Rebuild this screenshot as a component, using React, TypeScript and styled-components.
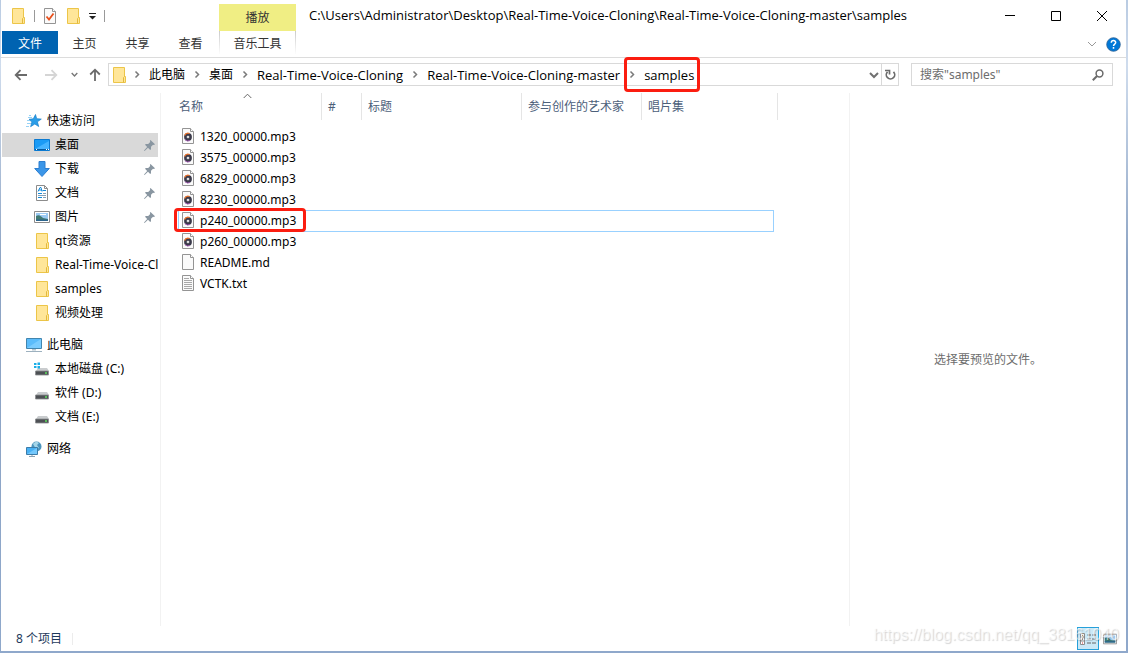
import React from "react";
import styled, { createGlobalStyle, css } from "styled-components";

const GlobalStyle = createGlobalStyle`
  * { box-sizing: border-box; }
  body {
    margin: 0;
    font-family: "Noto Sans", "Noto Sans CJK SC", sans-serif;
    font-size: 12px;
    line-height: 18px;
    color: #000;
  }
  button, input { font: inherit; color: inherit; }
  button { border: 0; background: none; padding: 0; cursor: default; }
  a { color: inherit; text-decoration: none; }
  svg { display: block; flex: none; }
`;

const pathFont = css`
  font-family: "Open Sans", "Noto Sans CJK SC", sans-serif;
  font-size: 13px;
`;

const Desktop = styled.div`
  min-height: 100vh;
  display: flex;
  padding: 0 2px 2px 1px;
  background: linear-gradient(#b9cbe2, #cfdced 10%, #8da4c4 40%, #8fa8cb);
`;

const Window = styled.main`
  position: relative;
  flex: 1;
  min-width: 0;
  display: flex;
  flex-direction: column;
  background: #fff;
`;

const Header = styled.header`
  display: grid;
  grid-template-columns: 218px 77px 1fr;
  grid-template-rows: 31px 26px;
  border-bottom: 1px solid #dcdcdc;
`;

const QuickBar = styled.div`
  display: flex;
  align-items: center;
  gap: 8px;
  padding-left: 9px;
`;

const QuickButton = styled.button`
  padding: 0 1px;
`;

const Divider = styled.span<{ $light?: boolean }>`
  width: 1px;
  height: 12px;
  background: ${(p) => (p.$light ? "#ececec" : "#999")};
`;

const ContextTitle = styled.div`
  display: flex;
  align-items: center;
  justify-content: center;
  margin-top: 4px;
  background: #f0ee84;
  color: #333;
`;

const TitleRow = styled.div`
  display: flex;
  justify-content: space-between;
  align-items: stretch;
  padding-left: 13px;
`;

const Title = styled.h1`
  ${pathFont}
  margin: 0;
  font-weight: 400;
  line-height: 31px;
  white-space: nowrap;
`;

const WindowButtons = styled.div`
  display: flex;
  padding-right: 1px;
`;

const WindowButton = styled.button`
  width: 46px;
  display: flex;
  align-items: center;
  justify-content: center;
`;

const Tabs = styled.nav`
  display: flex;
  align-items: flex-start;
  padding-left: 1px;
`;

const Tab = styled.button<{ $kind?: "file" | "context" }>`
  width: 53px;
  height: 23px;
  padding-top: 2px;
  color: #333;
  ${(p) =>
    p.$kind === "file" &&
    css`
      width: 56px;
      background: #0063b1;
      color: #fff;
    `}
  ${(p) =>
    p.$kind === "context" &&
    css`
      width: 77px;
      border: solid transparent;
      border-width: 0 1px;
      border-image: linear-gradient(#c8c8c8, #fff) 1;
    `}
`;

const RibbonTools = styled.div`
  display: flex;
  justify-content: flex-end;
  align-items: center;
  gap: 9px;
  padding-right: 5px;
`;

const AddressRow = styled.div`
  display: flex;
  align-items: center;
  height: 33px;
  padding-right: 13px;
`;

const NavButtons = styled.div`
  display: flex;
  align-items: center;
  width: 107px;
  padding-left: 13px;
`;

const NavButton = styled.button<{ $w: number }>`
  width: ${(p) => p.$w}px;
`;

const AddressBox = styled.nav`
  flex: 1;
  min-width: 0;
  height: 23px;
  display: flex;
  align-items: center;
  border: 1px solid #d9d9d9;
  padding-left: 2px;
`;

const Crumbs = styled.ol`
  display: flex;
  flex: 1;
  margin: 0 0 0 -2px;
  padding: 0;
  list-style: none;
  white-space: nowrap;
`;

const Crumb = styled.li`
  position: relative;
  display: flex;
  align-items: center;
`;

const CrumbLink = styled.a<{ $latin: boolean }>`
  ${(p) => p.$latin && pathFont}
`;

const RefreshButton = styled.button`
  width: 17px;
  height: 21px;
  margin-left: 2px;
  border-left: 1px solid #d9d9d9;
`;

const SearchBox = styled.label`
  width: 202px;
  height: 23px;
  margin-left: 12px;
  display: flex;
  align-items: center;
  padding: 0 8px;
  border: 1px solid #d9d9d9;
`;

const SearchInput = styled.input`
  flex: 1;
  min-width: 0;
  border: 0;
  padding: 0;
  outline: 0;
  background: none;
  &::placeholder { color: #6d6d6d; opacity: 1; }
`;

const Mark = styled.span<{ $kind: "crumb" | "file" }>`
  position: absolute;
  border: 3px solid #fb1d10;
  border-radius: 4px;
  pointer-events: none;
  z-index: 1;
  inset: ${(p) => (p.$kind === "crumb" ? "-9px -6px -8px 4px" : "-2px 16px -1px -1px")};
`;

const Content = styled.div`
  flex: 1;
  display: flex;
  padding-top: 2px;
`;

const Sidebar = styled.nav`
  width: 160px;
  padding: 16px 2px 0 1px;
  border-right: 1px solid #f2f2f2;
`;

const Tree = styled.ul`
  margin: 0 0 8px;
  padding: 0;
  list-style: none;
`;

const TreeLink = styled.a<{ $level?: number; $selected?: boolean }>`
  display: flex;
  align-items: center;
  gap: 5px;
  height: 24px;
  padding-right: 3px;
  padding-left: ${(p) => (p.$level ? 32 : 24)}px;
  background: ${(p) => (p.$selected ? "#d9d9d9" : "none")};
`;

const TreeLabel = styled.span`
  flex: 1;
  overflow: hidden;
  white-space: nowrap;
  margin-right: -3px;
`;

const Files = styled.section`
  flex: 1;
  min-width: 0;
  padding-left: 14px;
`;

const FileTable = styled.table`
  table-layout: fixed;
  width: 603px;
  border-collapse: separate;
  border-spacing: 0;
`;

const HeadCell = styled.th<{ $w: number }>`
  position: relative;
  width: ${(p) => p.$w}px;
  height: 27px;
  padding: 0 6px;
  border-right: 1px solid #e5e5e5;
  color: #4c607a;
  font-weight: 400;
  text-align: left;
  white-space: nowrap;
  &:first-child { padding-left: 4px; }
`;

const SortMark = styled.span`
  position: absolute;
  top: 0;
  left: 68px;
`;

const FileRows = styled.tbody`
  &::before { content: ""; display: block; height: 6px; }
`;

const FileRow = styled.tr<{ $selected?: boolean }>`
  position: relative;
  height: 21px;
  ${(p) =>
    p.$selected &&
    css`
      &::after {
        content: "";
        position: absolute;
        inset: 0 4px -1px 3px;
        border: 1px solid #99d1ff;
      }
    `}
`;

const FileCell = styled.td`
  position: relative;
  padding: 0;
`;

const FileName = styled.span`
  display: flex;
  align-items: flex-start;
  gap: 6px;
  padding-left: 7px;
`;

const Preview = styled.aside`
  width: 277px;
  display: flex;
  align-items: center;
  justify-content: center;
  border-left: 1px solid #f2f2f2;
  color: #6d6d6d;
`;

const StatusBar = styled.footer`
  display: flex;
  align-items: center;
  justify-content: space-between;
  height: 25px;
  padding: 0 5px 0 15px;
  color: #1e395b;
`;

const StatusGroup = styled.div<{ $gap: number }>`
  display: flex;
  align-items: center;
  gap: ${(p) => p.$gap}px;
`;

const ViewButton = styled.button<{ $active?: boolean }>`
  width: 22px;
  height: 23px;
  display: flex;
  align-items: center;
  justify-content: center;
  border: 1px solid ${(p) => (p.$active ? "#26a0da" : "transparent")};
  background: ${(p) => (p.$active ? "#cbe8f6" : "none")};
`;

const Watermark = styled.span`
  position: absolute;
  right: 7px;
  bottom: 5px;
  font: 16px/22px "Liberation Sans", sans-serif;
  color: rgba(255, 255, 255, 0.6);
  text-shadow: 1px 1px 1px rgba(0, 0, 0, 0.17);
  pointer-events: none;
`;

const FolderIcon = () => (
  <svg width="16" height="16" viewBox="0 0 16 16">
    <path d="M2.500.5h11v9h1v6h-12z" fill="#ffe699" stroke="#ecc548" />
    <path d="M12.500 15.500v-5l1-1" fill="none" stroke="#e3b93c" />
  </svg>
);

const PageIcon = ({ children }: { children?: React.ReactNode }) => (
  <svg width="12" height="16" viewBox="0 0 12 16">
    <path d="M.5.5h8l3 3v12H.5z" fill="#fafafa" stroke="#949494" />
    <path d="M8.500.5v3h3" fill="#fff" stroke="#949494" />
    {children}
  </svg>
);

const MusicIcon = () => (
  <PageIcon>
    <circle cx="6" cy="9" r="3.900" fill="#3b3a4a" />
    <path d="M2.600 7.500a3.900 3.900 0 0 1 5-2" stroke="#e8702a" strokeWidth="1.300" fill="none" />
    <path d="M3 11.500a3.900 3.900 0 0 0 5 1" stroke="#a05bb0" fill="none" />
    <circle cx="6" cy="9" r="1.300" fill="#fff" />
    <circle cx="6" cy="9" r=".5" fill="#444" />
  </PageIcon>
);

const TextIcon = () => (
  <PageIcon>
    <path d="M2 3.500h5M2 5.500h8M2 7.500h8M2 9.500h8M2 11.500h8M2 13.500h8" stroke="#a8a8a8" />
  </PageIcon>
);

const CheckPageIcon = () => (
  <PageIcon>
    <path d="M2.500 8.500l2.500 3 4.500-6" fill="none" stroke="#e8501c" strokeWidth="1.800" />
  </PageIcon>
);

const StarIcon = () => (
  <svg width="16" height="16" viewBox="0 0 16 16">
    <path d="M9.500 1.500l1.200 4.200 4.600.4-3.900 2.700 1.300 4.700L8.800 11l-4.200 2.700 1.300-4.600L3 6.300l4.300-.5z" fill="#2a9de8" stroke="#1780cc" strokeWidth=".7" />
    <path d="M2 4.500h4M3 2.500h2M1 7.500h3M1 10.500h4M0 13.500h3" stroke="#7cc6f2" strokeWidth=".8" />
  </svg>
);

const DesktopIcon = () => (
  <svg width="16" height="16" viewBox="0 0 16 16">
    <path d="M.5 2.500h15v11H.5z" fill="#1b9bf5" stroke="#0b7ad1" />
    <path d="M1 12L15 4v8z" fill="#46b4ff" />
    <path d="M1 12.500h14" stroke="#085b9f" />
    <path d="M2 12.500h1M12 12.500h1M14 12.500h1" stroke="#fff" />
  </svg>
);

const DownloadIcon = () => (
  <svg width="16" height="16" viewBox="0 0 16 16">
    <path d="M5 .5h6v7h4.300L8 15.500.7 7.500H5z" fill="#3b96e8" stroke="#2c7ed0" />
  </svg>
);

const DocumentIcon = () => (
  <svg width="16" height="16" viewBox="0 0 16 16">
    <path d="M2.500.5h8l3 3v12h-11z" fill="#fff" stroke="#8c8c8c" />
    <path d="M10.500.5v3h3" fill="none" stroke="#8c8c8c" />
    <path d="M4 6.500l2-4h1l1 4M5 5h3M8.500 5.500h3.500M4 8.500h4M4 12.500h4" stroke="#1589d8" fill="none" />
    <path d="M9 8.500h3M4 10.500h8M9 12.500h3" stroke="#87a0b4" />
  </svg>
);

const PictureIcon = ({ size = 16 }: { size?: number }) => (
  <svg width={size} height={size} viewBox="0 0 16 16">
    <path d="M.5 2.500h15v11H.5z" fill="#fff" stroke="#8c8c8c" />
    <path d="M2 4h12v8H2z" fill="#9bcaf3" />
    <path d="M2 7c3-2 5 0 7 2l5 1v2H2z" fill="#417a73" />
    <path d="M2 10.500h12V12H2z" fill="#2c658d" />
    <path d="M6 5.500h6" stroke="#fff" />
  </svg>
);

const ComputerIcon = () => (
  <svg width="16" height="16" viewBox="0 0 16 16">
    <path d="M.5 1.500h15v10H.5z" fill="#5bbcfb" stroke="#4285ae" />
    <path d="M1 11L15 2v9z" fill="#7accff" />
    <path d="M6 12h4v1.500H6z" fill="#b3c4cf" />
    <path d="M0 14.500h16" stroke="#9db1bf" />
  </svg>
);

const DriveIcon = ({ system }: { system?: boolean }) => (
  <svg width="16" height="16" viewBox="0 0 16 16">
    <path d="M4 7h9l2 3H2z" fill="#c9ccce" />
    <path d="M1.500 10h13v4h-13z" fill="#4d5054" stroke="#8b8e91" strokeWidth=".8" />
    <path d="M11 12h2" stroke="#5be05b" strokeWidth="1.400" />
    {system && (
      <>
        <path d="M0 1h7v6H0z" fill="#fff" />
        <path d="M0 2h2.500v2H0zM3.500 1.500H6V4H3.500zM0 5h2.500v2H0zM3.500 5H6v2.500H3.500z" fill="#19aee8" />
      </>
    )}
  </svg>
);

const NetworkIcon = () => (
  <svg width="16" height="16" viewBox="0 0 16 16">
    <circle cx="10.500" cy="5.500" r="5" fill="#4b94bd" />
    <path d="M7 3c2-3 5-2 6-1l-2 2 2 3-3 1z" fill="#a5d5e8" />
    <path d="M.5 6.500h11v7H.5z" fill="#48b1f5" stroke="#3c7ca8" />
    <path d="M1 13L11 7v6z" fill="#74c8fc" />
    <path d="M6 14v1.500M3 15.500h6" stroke="#8aa2b2" />
  </svg>
);

const PinIcon = () => (
  <svg width="11" height="11" viewBox="0 0 11 11">
    <path d="M6.500 0L11 4.200l-1 .8-1-.2-2 2v2.500l-.8.8L4 7.800.6 10.900 0 10.400 3.200 7 1 4.800 1.800 4h2.400l2-2-.3-1.200z" fill="#8996a1" />
  </svg>
);

const CrumbArrow = () => (
  <svg width="24" height="9" viewBox="0 0 24 9">
    <path d="M10.500 1.500l3 3-3 3" fill="none" stroke="#7a7a7a" strokeWidth="1.500" />
  </svg>
);

const ChevronDown = ({ size, color, weight = 1.5 }: { size: number; color: string; weight?: number }) => (
  <svg width={size} height={size} viewBox="0 0 10 10">
    <path d="M1 3l4 4 4-4" fill="none" stroke={color} strokeWidth={weight} />
  </svg>
);

const ArrowIcon = ({ color, turn = 0 }: { color: string; turn?: number }) => (
  <svg width="14" height="14" viewBox="0 0 14 14">
    <path transform={`rotate(${turn} 7 7)`} d="M13 7H2M6.500 2.200L1.700 7l4.800 4.800" fill="none" stroke={color} strokeWidth="1.800" />
  </svg>
);

const tree = [
  [
    { label: "快速访问", icon: <StarIcon />, root: true },
    { label: "桌面", icon: <DesktopIcon />, pinned: true, selected: true },
    { label: "下载", icon: <DownloadIcon />, pinned: true },
    { label: "文档", icon: <DocumentIcon />, pinned: true },
    { label: "图片", icon: <PictureIcon />, pinned: true },
    { label: "qt资源", icon: <FolderIcon /> },
    { label: "Real-Time-Voice-Cloning", icon: <FolderIcon /> },
    { label: "samples", icon: <FolderIcon /> },
    { label: "视频处理", icon: <FolderIcon /> },
  ],
  [
    { label: "此电脑", icon: <ComputerIcon />, root: true },
    { label: "本地磁盘 (C:)", icon: <DriveIcon system /> },
    { label: "软件 (D:)", icon: <DriveIcon /> },
    { label: "文档 (E:)", icon: <DriveIcon /> },
  ],
  [{ label: "网络", icon: <NetworkIcon />, root: true }],
] as { label: string; icon: React.ReactNode; root?: boolean; pinned?: boolean; selected?: boolean }[][];

const crumbs = ["此电脑", "桌面", "Real-Time-Voice-Cloning", "Real-Time-Voice-Cloning-master", "samples"];

const columns = [
  { label: "名称", width: 147, sorted: true },
  { label: "#", width: 40 },
  { label: "标题", width: 160 },
  { label: "参与创作的艺术家", width: 120 },
  { label: "唱片集", width: 136 },
];

const files = [
  { name: "1320_00000.mp3", icon: <MusicIcon /> },
  { name: "3575_00000.mp3", icon: <MusicIcon /> },
  { name: "6829_00000.mp3", icon: <MusicIcon /> },
  { name: "8230_00000.mp3", icon: <MusicIcon /> },
  { name: "p240_00000.mp3", icon: <MusicIcon />, selected: true },
  { name: "p260_00000.mp3", icon: <MusicIcon /> },
  { name: "README.md", icon: <PageIcon /> },
  { name: "VCTK.txt", icon: <TextIcon /> },
];

export default function App() {
  return (
    <>
      <GlobalStyle />
      <Desktop>
        <Window>
          <Header>
            <QuickBar>
              <FolderIcon />
              <Divider />
              <QuickButton aria-label="属性"><CheckPageIcon /></QuickButton>
              <button aria-label="新建文件夹"><FolderIcon /></button>
              <button aria-label="自定义快速访问工具栏">
                <svg width="7" height="8" viewBox="0 0 7 8">
                  <path d="M0 1.500h7" stroke="#222" />
                  <path d="M0 4h7L3.500 7.500z" fill="#222" />
                </svg>
              </button>
              <Divider />
            </QuickBar>
            <ContextTitle>播放</ContextTitle>
            <TitleRow>
              <Title>C:\Users\Administrator\Desktop\Real-Time-Voice-Cloning\Real-Time-Voice-Cloning-master\samples</Title>
              <WindowButtons>
                <WindowButton aria-label="最小化">
                  <svg width="10" height="11" viewBox="0 0 10 11"><path d="M0 5.500h10" stroke="#000" /></svg>
                </WindowButton>
                <WindowButton aria-label="最大化">
                  <svg width="10" height="10" viewBox="0 0 10 10"><path d="M.5.5h9v9h-9z" fill="none" stroke="#000" /></svg>
                </WindowButton>
                <WindowButton aria-label="关闭">
                  <svg width="10" height="10" viewBox="0 0 10 10"><path d="M0 0l10 10M10 0L0 10" stroke="#000" /></svg>
                </WindowButton>
              </WindowButtons>
            </TitleRow>
            <Tabs>
              <Tab $kind="file">文件</Tab>
              <Tab>主页</Tab>
              <Tab>共享</Tab>
              <Tab>查看</Tab>
            </Tabs>
            <Tab $kind="context">音乐工具</Tab>
            <RibbonTools>
              <button aria-label="展开功能区"><ChevronDown size={10} color="#999" weight={1} /></button>
              <button aria-label="帮助">
                <svg width="15" height="15" viewBox="0 0 15 15">
                  <circle cx="7.500" cy="7.500" r="6.800" fill="#0078d7" stroke="#2b5f93" strokeWidth=".8" />
                  <path d="M5.300 5.800c0-3 4.500-2.800 4.400-.2 0 1.500-2.200 1.500-2.200 3.300M7.500 10v1.700" fill="none" stroke="#fff" strokeWidth="1.500" />
                </svg>
              </button>
            </RibbonTools>
          </Header>

          <AddressRow>
            <NavButtons>
              <NavButton $w={30} aria-label="后退"><ArrowIcon color="#6b6b6b" /></NavButton>
              <NavButton $w={27} aria-label="前进"><ArrowIcon color="#d5d5d5" turn={180} /></NavButton>
              <NavButton $w={17} aria-label="最近浏览的位置"><ChevronDown size={7} color="#777" weight={2} /></NavButton>
              <NavButton $w={14} aria-label="上移"><ArrowIcon color="#6b6b6b" turn={90} /></NavButton>
            </NavButtons>
            <AddressBox aria-label="地址">
              <FolderIcon />
              <Crumbs>
                {crumbs.map((name, i) => (
                  <Crumb key={name}>
                    <CrumbArrow />
                    <CrumbLink href="#" $latin={/^[\x20-\x7e]+$/.test(name)}>{name}</CrumbLink>
                    {i === crumbs.length - 1 && <Mark $kind="crumb" />}
                  </Crumb>
                ))}
              </Crumbs>
              <button aria-label="以前的位置"><ChevronDown size={10} color="#707070" weight={2} /></button>
              <RefreshButton aria-label="刷新">
                <svg width="16" height="14" viewBox="0 0 16 14">
                  <path d="M5.500 3.800a4.200 4.200 0 1 0 6 0" fill="none" stroke="#6b6b6b" strokeWidth="1.700" />
                  <path d="M3 2.500h4.500v4" fill="none" stroke="#6b6b6b" strokeWidth="1.700" />
                </svg>
              </RefreshButton>
            </AddressBox>
            <SearchBox>
              <SearchInput type="text" aria-label="搜索" placeholder={'搜索"samples"'} />
              <svg width="12" height="12" viewBox="0 0 12 12">
                <circle cx="7.500" cy="4.500" r="3.400" fill="none" stroke="#6b6b6b" strokeWidth="1.500" />
                <path d="M5 7L.8 11.200" stroke="#6b6b6b" strokeWidth="2" />
              </svg>
            </SearchBox>
          </AddressRow>

          <Content>
            <Sidebar aria-label="导航窗格">
              {tree.map((group) => (
                <Tree key={group[0].label}>
                  {group.map((item) => (
                    <li key={item.label}>
                      <TreeLink href="#" $level={item.root ? 0 : 1} $selected={item.selected}>
                        {item.icon}
                        <TreeLabel>{item.label}</TreeLabel>
                        {item.pinned && <PinIcon />}
                      </TreeLink>
                    </li>
                  ))}
                </Tree>
              ))}
            </Sidebar>
            <Files>
              <FileTable>
                <thead>
                  <tr>
                    {columns.map((c) => (
                      <HeadCell key={c.label} $w={c.width}>
                        {c.label}
                        {c.sorted && (
                          <SortMark>
                            <svg width="9" height="6" viewBox="0 0 9 6">
                              <path d="M.7 5l3.800-3.800L8.300 5" fill="none" stroke="#666" />
                            </svg>
                          </SortMark>
                        )}
                      </HeadCell>
                    ))}
                  </tr>
                </thead>
                <FileRows>
                  {files.map((f) => (
                    <FileRow key={f.name} $selected={f.selected}>
                      <FileCell>
                        <FileName>
                          {f.icon}
                          {f.name}
                        </FileName>
                        {f.selected && <Mark $kind="file" />}
                      </FileCell>
                      <td colSpan={4} />
                    </FileRow>
                  ))}
                </FileRows>
              </FileTable>
            </Files>
            <Preview>选择要预览的文件。</Preview>
          </Content>

          <StatusBar>
            <StatusGroup $gap={10}>
              <span>8 个项目</span>
              <Divider $light />
            </StatusGroup>
            <StatusGroup $gap={0}>
              <ViewButton $active aria-label="详细信息">
                <svg width="16" height="14" viewBox="0 0 16 14">
                  <path d="M.5 1.500h4v11h-4zM.5 5h4M.5 9h4" fill="#fff" stroke="#8c8c8c" />
                  <path d="M2 3.500h1M2 7h1" stroke="#444" />
                  <path d="M2 11h1" stroke="#d33" />
                  <path d="M7 3h4M12 3h4M7 7h4M12 7h4M7 11h4M12 11h4" stroke="#666" />
                </svg>
              </ViewButton>
              <ViewButton aria-label="大图标"><PictureIcon size={14} /></ViewButton>
            </StatusGroup>
          </StatusBar>
          <Watermark>https://blog.csdn.net/qq_38161040</Watermark>
        </Window>
      </Desktop>
    </>
  );
}
